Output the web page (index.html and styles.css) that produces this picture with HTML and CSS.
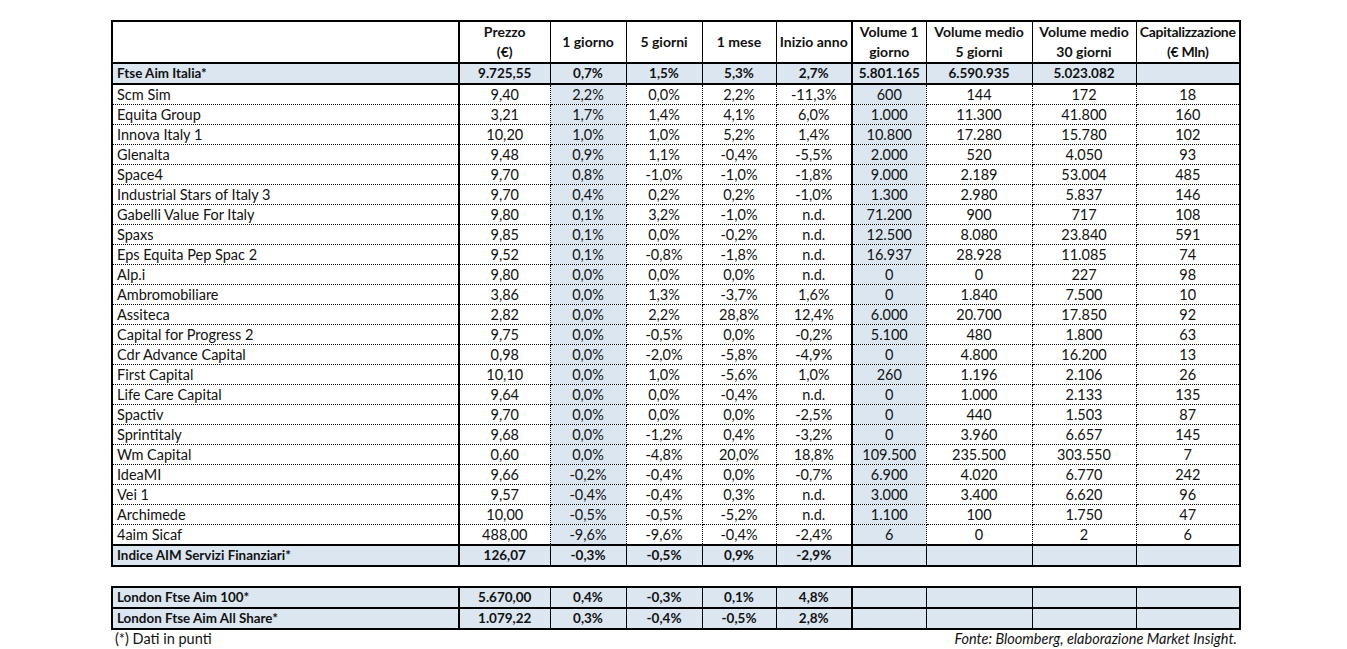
FILE: index.html
```html
<!DOCTYPE html>
<html lang="it">
<head>
<meta charset="utf-8">
<title>AIM Servizi Finanziari</title>
<link rel="stylesheet" href="styles.css">
</head>
<body>
<div class="page">
<table class="grid main">
<colgroup>
<col class="c-name"><col class="c-px"><col class="c-1g"><col class="c-5g"><col class="c-1m"><col class="c-ia"><col class="c-v1"><col class="c-vm5"><col class="c-vm30"><col class="c-cap">
</colgroup>
<thead>
<tr class="head">
<th class="name thick-r"></th>
<th>Prezzo<br>(€)</th>
<th>1 giorno</th>
<th>5 giorni</th>
<th>1 mese</th>
<th class="thick-r">Inizio anno</th>
<th>Volume 1<br>giorno</th>
<th>Volume medio<br>5 giorni</th>
<th>Volume medio<br>30 giorni</th>
<th class="cap">Capitalizzazione<br>(€ Mln)</th>
</tr>
</thead>
<tbody>
<tr class="index first">
<td class="name thick-r">Ftse Aim Italia*</td><td>9.725,55</td><td>0,7%</td><td>1,5%</td><td>5,3%</td><td class="thick-r">2,7%</td><td>5.801.165</td><td>6.590.935</td><td>5.023.082</td><td></td>
</tr>
<tr class="row"><td class="name thick-r">Scm Sim</td><td>9,40</td><td class="hl">2,2%</td><td>0,0%</td><td>2,2%</td><td class="thick-r">-11,3%</td><td class="hl">600</td><td>144</td><td>172</td><td>18</td></tr>
<tr class="row"><td class="name thick-r">Equita Group</td><td>3,21</td><td class="hl">1,7%</td><td>1,4%</td><td>4,1%</td><td class="thick-r">6,0%</td><td class="hl">1.000</td><td>11.300</td><td>41.800</td><td>160</td></tr>
<tr class="row"><td class="name thick-r">Innova Italy 1</td><td>10,20</td><td class="hl">1,0%</td><td>1,0%</td><td>5,2%</td><td class="thick-r">1,4%</td><td class="hl">10.800</td><td>17.280</td><td>15.780</td><td>102</td></tr>
<tr class="row"><td class="name thick-r">Glenalta</td><td>9,48</td><td class="hl">0,9%</td><td>1,1%</td><td>-0,4%</td><td class="thick-r">-5,5%</td><td class="hl">2.000</td><td>520</td><td>4.050</td><td>93</td></tr>
<tr class="row"><td class="name thick-r">Space4</td><td>9,70</td><td class="hl">0,8%</td><td>-1,0%</td><td>-1,0%</td><td class="thick-r">-1,8%</td><td class="hl">9.000</td><td>2.189</td><td>53.004</td><td>485</td></tr>
<tr class="row"><td class="name thick-r">Industrial Stars of Italy 3</td><td>9,70</td><td class="hl">0,4%</td><td>0,2%</td><td>0,2%</td><td class="thick-r">-1,0%</td><td class="hl">1.300</td><td>2.980</td><td>5.837</td><td>146</td></tr>
<tr class="row"><td class="name thick-r">Gabelli Value For Italy</td><td>9,80</td><td class="hl">0,1%</td><td>3,2%</td><td>-1,0%</td><td class="thick-r">n.d.</td><td class="hl">71.200</td><td>900</td><td>717</td><td>108</td></tr>
<tr class="row"><td class="name thick-r">Spaxs</td><td>9,85</td><td class="hl">0,1%</td><td>0,0%</td><td>-0,2%</td><td class="thick-r">n.d.</td><td class="hl">12.500</td><td>8.080</td><td>23.840</td><td>591</td></tr>
<tr class="row"><td class="name thick-r">Eps Equita Pep Spac 2</td><td>9,52</td><td class="hl">0,1%</td><td>-0,8%</td><td>-1,8%</td><td class="thick-r">n.d.</td><td class="hl">16.937</td><td>28.928</td><td>11.085</td><td>74</td></tr>
<tr class="row"><td class="name thick-r">Alp.i</td><td>9,80</td><td class="hl">0,0%</td><td>0,0%</td><td>0,0%</td><td class="thick-r">n.d.</td><td class="hl">0</td><td>0</td><td>227</td><td>98</td></tr>
<tr class="row"><td class="name thick-r">Ambromobiliare</td><td>3,86</td><td class="hl">0,0%</td><td>1,3%</td><td>-3,7%</td><td class="thick-r">1,6%</td><td class="hl">0</td><td>1.840</td><td>7.500</td><td>10</td></tr>
<tr class="row"><td class="name thick-r">Assiteca</td><td>2,82</td><td class="hl">0,0%</td><td>2,2%</td><td>28,8%</td><td class="thick-r">12,4%</td><td class="hl">6.000</td><td>20.700</td><td>17.850</td><td>92</td></tr>
<tr class="row"><td class="name thick-r">Capital for Progress 2</td><td>9,75</td><td class="hl">0,0%</td><td>-0,5%</td><td>0,0%</td><td class="thick-r">-0,2%</td><td class="hl">5.100</td><td>480</td><td>1.800</td><td>63</td></tr>
<tr class="row"><td class="name thick-r">Cdr Advance Capital</td><td>0,98</td><td class="hl">0,0%</td><td>-2,0%</td><td>-5,8%</td><td class="thick-r">-4,9%</td><td class="hl">0</td><td>4.800</td><td>16.200</td><td>13</td></tr>
<tr class="row"><td class="name thick-r">First Capital</td><td>10,10</td><td class="hl">0,0%</td><td>1,0%</td><td>-5,6%</td><td class="thick-r">1,0%</td><td class="hl">260</td><td>1.196</td><td>2.106</td><td>26</td></tr>
<tr class="row"><td class="name thick-r">Life Care Capital</td><td>9,64</td><td class="hl">0,0%</td><td>0,0%</td><td>-0,4%</td><td class="thick-r">n.d.</td><td class="hl">0</td><td>1.000</td><td>2.133</td><td>135</td></tr>
<tr class="row"><td class="name thick-r">Spactiv</td><td>9,70</td><td class="hl">0,0%</td><td>0,0%</td><td>0,0%</td><td class="thick-r">-2,5%</td><td class="hl">0</td><td>440</td><td>1.503</td><td>87</td></tr>
<tr class="row"><td class="name thick-r">Sprintitaly</td><td>9,68</td><td class="hl">0,0%</td><td>-1,2%</td><td>0,4%</td><td class="thick-r">-3,2%</td><td class="hl">0</td><td>3.960</td><td>6.657</td><td>145</td></tr>
<tr class="row"><td class="name thick-r">Wm Capital</td><td>0,60</td><td class="hl">0,0%</td><td>-4,8%</td><td>20,0%</td><td class="thick-r">18,8%</td><td class="hl">109.500</td><td>235.500</td><td>303.550</td><td>7</td></tr>
<tr class="row"><td class="name thick-r">IdeaMI</td><td>9,66</td><td class="hl">-0,2%</td><td>-0,4%</td><td>0,0%</td><td class="thick-r">-0,7%</td><td class="hl">6.900</td><td>4.020</td><td>6.770</td><td>242</td></tr>
<tr class="row"><td class="name thick-r">Vei 1</td><td>9,57</td><td class="hl">-0,4%</td><td>-0,4%</td><td>0,3%</td><td class="thick-r">n.d.</td><td class="hl">3.000</td><td>3.400</td><td>6.620</td><td>96</td></tr>
<tr class="row"><td class="name thick-r">Archimede</td><td>10,00</td><td class="hl">-0,5%</td><td>-0,5%</td><td>-5,2%</td><td class="thick-r">n.d.</td><td class="hl">1.100</td><td>100</td><td>1.750</td><td>47</td></tr>
<tr class="row"><td class="name thick-r">4aim Sicaf</td><td>488,00</td><td class="hl">-9,6%</td><td>-9,6%</td><td>-0,4%</td><td class="thick-r">-2,4%</td><td class="hl">6</td><td>0</td><td>2</td><td>6</td></tr>
<tr class="index last">
<td class="name thick-r">Indice AIM Servizi Finanziari*</td><td>126,07</td><td>-0,3%</td><td>-0,5%</td><td>0,9%</td><td class="thick-r">-2,9%</td><td></td><td></td><td></td><td></td>
</tr>
</tbody>
</table>

<table class="grid london">
<colgroup>
<col class="c-name"><col class="c-px"><col class="c-1g"><col class="c-5g"><col class="c-1m"><col class="c-ia"><col class="c-v1"><col class="c-vm5"><col class="c-vm30"><col class="c-cap">
</colgroup>
<tbody>
<tr class="index ldn">
<td class="name thick-r">London Ftse Aim 100*</td><td>5.670,00</td><td>0,4%</td><td>-0,3%</td><td>0,1%</td><td class="thick-r">4,8%</td><td></td><td></td><td></td><td></td>
</tr>
<tr class="index ldn">
<td class="name thick-r">London Ftse Aim All Share*</td><td>1.079,22</td><td>0,3%</td><td>-0,4%</td><td>-0,5%</td><td class="thick-r">2,8%</td><td></td><td></td><td></td><td></td>
</tr>
</tbody>
</table>

<div class="notes">
<span class="note">(*) Dati in punti</span>
<span class="source">Fonte: Bloomberg, elaborazione Market Insight.</span>
</div>
</div>
</body>
</html>
```

FILE: styles.css
```css
html, body {
  margin: 0;
  padding: 0;
  background: #ffffff;
}

body {
  font-family: "Lato", "Liberation Sans", sans-serif;
  font-size: 14.5px;
  color: #111111;
}

.page {
  padding: 20px 0 0 111px;
  width: 1130px;
}

.grid {
  border-collapse: collapse;
  table-layout: fixed;
  width: 1130px;
}

.c-name { width: 347px; }
.c-px { width: 91px; }
.c-1g { width: 76px; }
.c-5g { width: 76px; }
.c-1m { width: 74px; }
.c-ia { width: 76px; }
.c-v1 { width: 74px; }
.c-vm5 { width: 106px; }
.c-vm30 { width: 104px; }
.c-cap { width: 104px; }

.grid th,
.grid td {
  padding: 0 1px;
  text-align: center;
  white-space: nowrap;
  overflow: hidden;
  line-height: 19px;
}

.grid .name {
  text-align: left;
  padding-left: 4px;
}

.main {
  border: 2px solid #000;
}

.head th {
  height: 40px;
  line-height: 20px;
  font-size: 14px;
  font-weight: bold;
  border-left: 1px solid #000;
  border-right: 1px solid #000;
  border-bottom: 2px solid #000;
}

.head th.cap {
  letter-spacing: -0.3px;
}

.index td {
  background: #dce6f1;
  font-weight: bold;
  font-size: 13.5px;
  height: 19px;
  border-left: 1px solid #000;
  border-right: 1px solid #000;
}

.index td.name {
  font-size: 13.4px;
}

.first td {
  border-bottom: 2px solid #000;
}

.last td {
  border-top: 2px solid #000;
}

.row td {
  height: 19px;
  border: 1px dotted #000;
}

.row td.hl {
  background: #dce6f1;
}

.grid .thick-r {
  border-right: 2px solid #000;
}

.london {
  margin-top: 19px;
  border: 2px solid #000;
}

.ldn td {
  border-bottom: 2px solid #000;
}

.notes {
  display: flex;
  justify-content: space-between;
  padding: 0 4px;
  line-height: 17px;
}

.source {
  font-style: italic;
}
```
